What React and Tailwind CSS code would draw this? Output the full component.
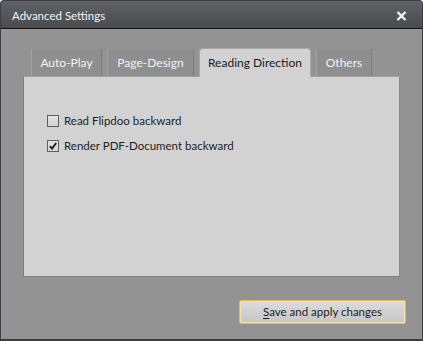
import React from "react";

const font = { fontFamily: 'Lato, "Noto Sans", sans-serif' };

function Tab({ label, active, width }) {
    if (active) {
        return (
            <div
                className={`${width} h-[29px] -mb-px mt-[-1px] relative z-10 flex items-center justify-center bg-[#d2d2d2] border border-b-0 border-[#a9a9a9] rounded-t-[4px] text-[12px] text-[#1b1b1b]`}
            >
                {label}
            </div>
        );
    }
    return (
        <div
            className={`${width} h-[27px] flex items-center justify-center bg-[#8f8f8f] border-l border-r border-l-[#a3a3a3] border-r-[#7c7c7c] text-[12px] text-[#f2f2f2]`}
        >
            {label}
        </div>
    );
}

function CheckRow({ label, checked }) {
    return (
        <div className="flex items-center gap-[5px] h-[12px]">
            <div className="w-[12px] h-[12px] border border-[#5e5e5e] bg-gradient-to-b from-[#e2e2e2] to-[#d4d4d4] flex items-center justify-center">
                {checked && (
                    <svg width="8" height="8" viewBox="0 0 8 8">
                        <path d="M0.8 4.2 L3 6.6 L7.2 1" fill="none" stroke="#1e1e1e" strokeWidth="1.9" />
                    </svg>
                )}
            </div>
            <span className="text-[11.5px] text-[#1e1e1e] leading-none">{label}</span>
        </div>
    );
}

export default function App() {
    return (
        <div
            className="w-[423px] h-[341px] flex flex-col bg-[#3c3d45] rounded-t-[4px] p-[1px] pb-[2px]"
            style={font}
        >
            {/* Title bar */}
            <div className="h-[28px] shrink-0 flex items-center justify-between pl-[11px] pr-[15px] pt-[2px] bg-gradient-to-b from-[#616266] to-[#4a4b4f] rounded-t-[3px] border-b border-[#151515]">
                <span className="text-[11.5px] text-[#f4f4f4]">Advanced Settings</span>
                <svg width="11" height="10" viewBox="0 0 11 10">
                    <path d="M1.5 1 L9.5 9 M9.5 1 L1.5 9" stroke="#f4f4f4" strokeWidth="2.4" />
                </svg>
            </div>

            {/* Body */}
            <div className="flex-1 flex flex-col bg-[#939393] pl-[22px] pr-[16px] pt-[20px]">
                <div className="flex items-end gap-[5px] pl-[8px] pr-[6px]">
                    <Tab label="Auto-Play" width="w-[71px]" />
                    <Tab label="Page-Design" width="w-[87px]" />
                    <Tab label="Reading Direction" active width="w-[112px]" />
                    <Tab label="Others" width="w-[56px]" />
                </div>
                <div className="mr-[6px] h-[201px] bg-[#d2d2d2] border border-[#7d7d7d] border-t-[#a0a0a0] border-r-[#8a8a8a] pt-[38px] pl-[23px] flex flex-col gap-[13px]">
                    <CheckRow label="Read Flipdoo backward" />
                    <CheckRow label="Render PDF-Document backward" checked />
                </div>
                <div className="flex justify-end mt-[23px]">
                    <button className="w-[167px] h-[24px] rounded-[2px] border border-[#e2bd55] bg-gradient-to-b from-[#dcdcdc] to-[#c6c6c6] text-[11.5px] text-[#1b1b1b] shadow-[inset_0_0_0_1px_#f4e2a6]">
                        <span className="underline underline-offset-2">S</span>ave and apply changes
                    </button>
                </div>
            </div>
        </div>
    );
}
